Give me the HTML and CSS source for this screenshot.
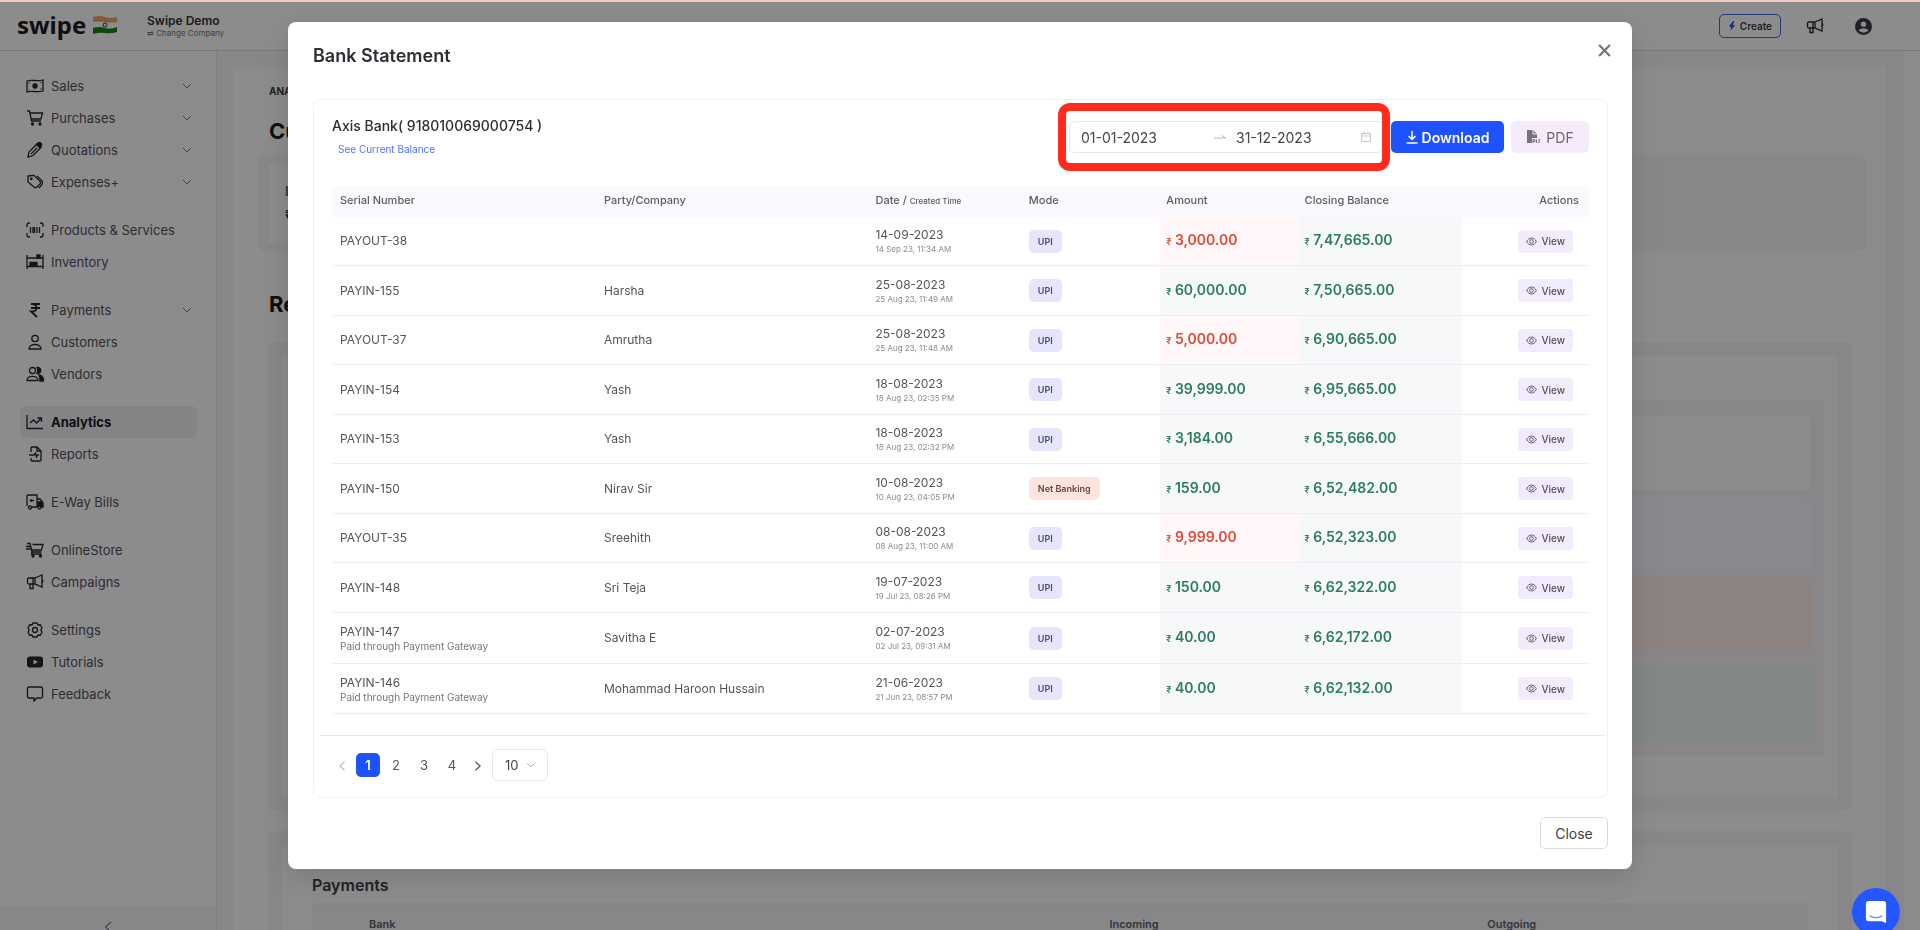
FILE: index.html
```html
<!DOCTYPE html>
<html lang="en">
<head>
    <meta charset="UTF-8">
    <meta name="viewport" content="width=device-width, initial-scale=1.0">
    <title>Bank Statement - Swipe</title>
    <link rel="stylesheet" href="styles.css">
</head>
<body>
    <!-- Icon set -->
    <svg class="sprite" aria-hidden="true">
        <symbol id="i-cash" viewBox="0 0 18 16"><path d="M1 3c5-2 10 1 16-1v11c-6 2-11-1-16 1z"/><circle cx="9" cy="8" r="2" fill="currentColor"/><path d="M3 4.500v1M15 10.500v1M3 11.500v.5M15 4v1"/></symbol>
        <symbol id="i-cart" viewBox="0 0 18 16"><path d="M1 1h2.500l2 10h9.500M4 3h12.500l-1.700 6H5.300"/><circle cx="6.500" cy="14" r="1" fill="currentColor"/><circle cx="14" cy="14" r="1" fill="currentColor"/></symbol>
        <symbol id="i-pen" viewBox="0 0 18 16"><path d="M2 15l1-5 8-8 4 3.500-8 8z"/><path d="M10.500 2.500l2-1.800c2-.6 3.600 1 3 3l-2 1.800z" fill="currentColor"/><path d="M5 12l6-6"/></symbol>
        <symbol id="i-tags" viewBox="0 0 18 16"><path d="M2 2l6-.6 6 6c1 1 .5 2 0 2.500L11 13c-1 1-2 .8-3 0L2 8z"/><path d="M11 2l4.500 4.500c1.500 1.700 1.300 3 0 4.500l-2.500 3"/><circle cx="5.300" cy="4.800" r=".7" fill="currentColor"/></symbol>
        <symbol id="i-barcode" viewBox="0 0 18 16"><path d="M1 5V3q0-2 2-2h1M14 1h1q2 0 2 2v2M17 11v2q0 2-2 2h-1M4 15H3q-2 0-2-2v-2"/><path d="M4.500 5v6M7 5v6M8.500 5v6M11 5v6M13.500 5v6"/></symbol>
        <symbol id="i-shelf" viewBox="0 0 18 16"><path d="M1 1v14M17 1v14M1 4h16M1 12.500h16"/><path d="M11 1h3v3h-3zM4 8.500h3v3H4zM8 8.500h3v3H8z" fill="currentColor"/></symbol>
        <symbol id="i-rupee" viewBox="0 0 18 16"><path d="M5 2h9M5 6h9M6 2c6 0 6 7.500 0 7.500H5l6 5.500" stroke-width="1.800"/></symbol>
        <symbol id="i-user" viewBox="0 0 18 16"><circle cx="9" cy="4.500" r="3.200"/><path d="M3 15c0-6 12-6 12 0z"/></symbol>
        <symbol id="i-users" viewBox="0 0 18 16"><circle cx="6.500" cy="4.500" r="3"/><path d="M1 14.500c0-5.500 11-5.500 11 0z"/><path d="M11 1.500c5 0 5 6 0 6 1-2 1-4 0-6zM13 9c3 .5 4.500 2.500 4.500 6H14c0-2-.3-4-1-6z" fill="currentColor"/></symbol>
        <symbol id="i-chart" viewBox="0 0 18 16"><path d="M1 1v13.500h16M4 9l3.500-3 3 3L15 4.500M11.500 4H15.500v4"/></symbol>
        <symbol id="i-report" viewBox="0 0 18 16"><path d="M5 6V2q0-1 1-1h5l4 4v9q0 1-1 1H6q-1 0-1-1v-2M11 1v4h4M3 9h5l1.500-2 1 4 1-2h1.500"/></symbol>
        <symbol id="i-truck" viewBox="0 0 18 16"><path d="M1 12V2q0-1 1-1h9v12H6M11 5h3l3 4v4h-2M5 5v3M4 6.500h4"/><path d="M12 8h4.500v4H12z" fill="currentColor"/><circle cx="4" cy="13.500" r="1.500"/><circle cx="13.500" cy="13.500" r="1.500"/></symbol>
        <symbol id="i-store" viewBox="0 0 18 16"><path d="M1 1.500h3l2 8.500h9.500M6.500 2.500H17l-1.500 5.500H6M0 4.500h4M0 7h4.500M6 10l-.5 2h10"/><circle cx="7" cy="14" r="1" fill="currentColor"/><circle cx="14.500" cy="14" r="1" fill="currentColor"/></symbol>
        <symbol id="i-horn" viewBox="0 0 18 16"><path d="M9 4L16 1v12l-7-3zM9 4H3Q1.500 4 1.500 5.500v3Q1.500 10 3 10h6M4 10v4.500h3V10M7 4v6M16 5.500q1.500 1.500 0 3"/></symbol>
        <symbol id="i-gear" viewBox="0 0 18 16"><path d="M7 1h4l1 2 2.300-.2 1.700 3-1.200 2.200L16 10.200l-1.700 3L12 13l-1 2H7l-1-2-2.300.2-1.700-3L3.200 8 2 5.800l1.700-3L6 3z"/><circle cx="9" cy="8" r="2.500"/></symbol>
        <symbol id="i-video" viewBox="0 0 18 16"><path fill="currentColor" fill-rule="evenodd" d="M4 2.500h10q3 0 3 3v5q0 3-3 3H4q-3 0-3-3v-5q0-3 3-3zM7.500 5.500v5L12 8z" stroke="none"/></symbol>
        <symbol id="i-chat" viewBox="0 0 18 16"><path d="M3 1h12q1.500 0 1.500 1.500v8Q16.500 12 15 12h-4l-3 3v-3H3q-1.500 0-1.500-1.500v-8Q1.500 1 3 1z"/></symbol>
        <symbol id="i-down" viewBox="0 0 12 12"><path d="M2 4l4 4 4-4"/></symbol>
        <symbol id="i-left" viewBox="0 0 12 12"><path d="M9 1L3.500 6 9 11"/></symbol>
        <symbol id="i-right" viewBox="0 0 12 12"><path d="M3 1l5.500 5L3 11"/></symbol>
        <symbol id="i-eye" viewBox="0 0 12 12"><path d="M.8 6C3 1 9 1 11.200 6 9 11 3 11 .8 6z"/><circle cx="6" cy="6" r="2"/></symbol>
    </svg>

    <div class="top-strip"></div>

    <header class="header">
        <div class="brand">swipe
            <svg class="flag" viewBox="0 0 26 20"><path fill="#f5a65b" d="M1 2q6-2 12 0t12 0v6H1z"/><path fill="#fff" d="M1 7q6-1 12 0t12 0v6H1z"/><path fill="#138808" d="M1 13q6-2 12 0t12-1v5q-6 2-12 1t-12 1z"/><circle cx="13" cy="10" r="2" fill="none" stroke="#335"/></svg>
        </div>
        <div class="company">
            <div class="company-name">Swipe Demo</div>
            <a class="company-change" href="#"><span>⇄</span> Change Company</a>
        </div>
        <div class="header-actions">
            <button class="create-btn" type="button"><svg class="bolt" viewBox="0 0 10 12"><path fill="#1f52ff" d="M6 0L1 7h3l-1 5 6-7H6l2-5z"/></svg>Create</button>
            <svg class="icon"><use href="#i-horn"/></svg>
            <svg class="avatar" viewBox="0 0 18 18"><circle cx="9" cy="9" r="9" fill="#3c3c42"/><circle cx="9" cy="6.500" r="2.800" fill="#fff"/><path d="M3.500 13q5.500-4.500 11 0-5.500 5-11 0z" fill="#fff"/></svg>
        </div>
    </header>

    <div class="layout">
        <nav class="sidebar">
            <div class="nav-group">
                <a class="nav-item" href="#"><svg class="icon"><use href="#i-cash"/></svg>Sales<svg class="caret"><use href="#i-down"/></svg></a>
                <a class="nav-item" href="#"><svg class="icon"><use href="#i-cart"/></svg>Purchases<svg class="caret"><use href="#i-down"/></svg></a>
                <a class="nav-item" href="#"><svg class="icon"><use href="#i-pen"/></svg>Quotations<svg class="caret"><use href="#i-down"/></svg></a>
                <a class="nav-item" href="#"><svg class="icon"><use href="#i-tags"/></svg>Expenses+<svg class="caret"><use href="#i-down"/></svg></a>
            </div>
            <div class="nav-group">
                <a class="nav-item" href="#"><svg class="icon"><use href="#i-barcode"/></svg>Products &amp; Services</a>
                <a class="nav-item" href="#"><svg class="icon"><use href="#i-shelf"/></svg>Inventory</a>
            </div>
            <div class="nav-group">
                <a class="nav-item" href="#"><svg class="icon"><use href="#i-rupee"/></svg>Payments<svg class="caret"><use href="#i-down"/></svg></a>
                <a class="nav-item" href="#"><svg class="icon"><use href="#i-user"/></svg>Customers</a>
                <a class="nav-item" href="#"><svg class="icon"><use href="#i-users"/></svg>Vendors</a>
            </div>
            <div class="nav-group">
                <a class="nav-item active" href="#"><svg class="icon"><use href="#i-chart"/></svg>Analytics</a>
                <a class="nav-item" href="#"><svg class="icon"><use href="#i-report"/></svg>Reports</a>
            </div>
            <div class="nav-group">
                <a class="nav-item" href="#"><svg class="icon"><use href="#i-truck"/></svg>E-Way Bills</a>
            </div>
            <div class="nav-group">
                <a class="nav-item" href="#"><svg class="icon"><use href="#i-store"/></svg>OnlineStore</a>
                <a class="nav-item" href="#"><svg class="icon"><use href="#i-horn"/></svg>Campaigns</a>
            </div>
            <div class="nav-group">
                <a class="nav-item" href="#"><svg class="icon"><use href="#i-gear"/></svg>Settings</a>
                <a class="nav-item" href="#"><svg class="icon"><use href="#i-video"/></svg>Tutorials</a>
                <a class="nav-item" href="#"><svg class="icon"><use href="#i-chat"/></svg>Feedback</a>
            </div>
            <button class="collapse-btn" type="button" aria-label="Collapse menu"><svg class="caret"><use href="#i-left"/></svg></button>
        </nav>

        <main class="main">
            <div class="page">
                <div class="eyebrow">ANALYTICS</div>
                <h1 class="page-title">Current</h1>
                <div class="summary">
                    <div class="summary-card">
                        <div class="summary-label">Bank</div>
                        <div class="summary-value">₹ 0.00</div>
                    </div>
                </div>
                <h2 class="page-title section-title">Reports</h2>
                <section class="section">
                    <div class="tiles">
                        <div class="tile"></div>
                        <div class="tile tile-lilac"></div>
                        <div class="tile tile-peach"></div>
                        <div class="tile tile-mint"></div>
                    </div>
                </section>
                <section class="section payments">
                    <h3 class="payments-title">Payments</h3>
                    <table class="payments-table">
                        <thead><tr><th>Bank</th><th>Incoming</th><th>Outgoing</th></tr></thead>
                    </table>
                </section>
            </div>
        </main>
    </div>

    <div class="overlay">
        <div class="modal" role="dialog" aria-labelledby="modalTitle">
            <div class="modal-header">
                <h2 class="modal-title" id="modalTitle">Bank Statement</h2>
                <button class="modal-x" type="button" aria-label="Close dialog"><svg viewBox="0 0 12 12"><path d="M1 1l10 10M11 1L1 11"/></svg></button>
            </div>

            <div class="card">
                <div class="toolbar">
                    <div class="account">
                        <div class="account-name">Axis Bank( 918010069000754 )</div>
                        <a class="account-link" href="#">See Current Balance</a>
                    </div>
                    <div class="toolbar-actions">
                        <div class="range">
                            <input class="range-input" type="text" value="01-01-2023" aria-label="Start date">
                            <svg class="range-arrow" viewBox="0 0 12 8"><path d="M0 5h11.500L8 2.500"/></svg>
                            <input class="range-input range-end" type="text" value="31-12-2023" aria-label="End date">
                            <svg class="range-cal" viewBox="0 0 10 10"><path d="M.5 1.500h9v8h-9zM.5 4h9M3 0v2.500M7 0v2.500"/></svg>
                        </div>
                        <button class="btn btn-primary" type="button"><svg class="btn-icon" viewBox="0 0 12 14"><path d="M6 1v8M2.500 6L6 9.500 9.500 6M.5 13h11"/></svg>Download</button>
                        <button class="btn btn-pdf" type="button"><svg class="btn-icon pdf-icon" viewBox="0 0 14 14"><path d="M1 0h6l4 4v4H6v5H1z" fill="#77727f"/><path d="M7 0v4h4" fill="none" stroke="#f3eafc"/><path d="M7 9v4M7 9.500h2v2H7M10.500 9.500v3h1M13 13V9.500h1" fill="none" stroke="#77727f"/></svg>PDF</button>
                    </div>
                </div>

                <table class="statement">
                    <thead>
                        <tr>
                            <th class="c-serial">Serial Number</th>
                            <th class="c-party">Party/Company</th>
                            <th class="c-date">Date / <small>Created Time</small></th>
                            <th class="c-mode">Mode</th>
                            <th class="c-amount">Amount</th>
                            <th class="c-balance">Closing Balance</th>
                            <th class="c-actions">Actions</th>
                        </tr>
                    </thead>
                    <tbody>
                        <tr>
                            <td>PAYOUT-38</td>
                            <td></td>
                            <td>14-09-2023<div class="time">14 Sep 23, 11:34 AM</div></td>
                            <td><span class="tag">UPI</span></td>
                            <td class="money out"><span>₹</span> 3,000.00</td>
                            <td class="money in"><span>₹</span> 7,47,665.00</td>
                            <td class="actions"><button class="view-btn" type="button"><svg><use href="#i-eye"/></svg>View</button></td>
                        </tr>
                        <tr>
                            <td>PAYIN-155</td>
                            <td>Harsha</td>
                            <td>25-08-2023<div class="time">25 Aug 23, 11:49 AM</div></td>
                            <td><span class="tag">UPI</span></td>
                            <td class="money in"><span>₹</span> 60,000.00</td>
                            <td class="money in"><span>₹</span> 7,50,665.00</td>
                            <td class="actions"><button class="view-btn" type="button"><svg><use href="#i-eye"/></svg>View</button></td>
                        </tr>
                        <tr>
                            <td>PAYOUT-37</td>
                            <td>Amrutha</td>
                            <td>25-08-2023<div class="time">25 Aug 23, 11:48 AM</div></td>
                            <td><span class="tag">UPI</span></td>
                            <td class="money out"><span>₹</span> 5,000.00</td>
                            <td class="money in"><span>₹</span> 6,90,665.00</td>
                            <td class="actions"><button class="view-btn" type="button"><svg><use href="#i-eye"/></svg>View</button></td>
                        </tr>
                        <tr>
                            <td>PAYIN-154</td>
                            <td>Yash</td>
                            <td>18-08-2023<div class="time">18 Aug 23, 02:35 PM</div></td>
                            <td><span class="tag">UPI</span></td>
                            <td class="money in"><span>₹</span> 39,999.00</td>
                            <td class="money in"><span>₹</span> 6,95,665.00</td>
                            <td class="actions"><button class="view-btn" type="button"><svg><use href="#i-eye"/></svg>View</button></td>
                        </tr>
                        <tr>
                            <td>PAYIN-153</td>
                            <td>Yash</td>
                            <td>18-08-2023<div class="time">18 Aug 23, 02:32 PM</div></td>
                            <td><span class="tag">UPI</span></td>
                            <td class="money in"><span>₹</span> 3,184.00</td>
                            <td class="money in"><span>₹</span> 6,55,666.00</td>
                            <td class="actions"><button class="view-btn" type="button"><svg><use href="#i-eye"/></svg>View</button></td>
                        </tr>
                        <tr>
                            <td>PAYIN-150</td>
                            <td>Nirav Sir</td>
                            <td>10-08-2023<div class="time">10 Aug 23, 04:05 PM</div></td>
                            <td><span class="tag tag-net">Net Banking</span></td>
                            <td class="money in"><span>₹</span> 159.00</td>
                            <td class="money in"><span>₹</span> 6,52,482.00</td>
                            <td class="actions"><button class="view-btn" type="button"><svg><use href="#i-eye"/></svg>View</button></td>
                        </tr>
                        <tr>
                            <td>PAYOUT-35</td>
                            <td>Sreehith</td>
                            <td>08-08-2023<div class="time">08 Aug 23, 11:00 AM</div></td>
                            <td><span class="tag">UPI</span></td>
                            <td class="money out"><span>₹</span> 9,999.00</td>
                            <td class="money in"><span>₹</span> 6,52,323.00</td>
                            <td class="actions"><button class="view-btn" type="button"><svg><use href="#i-eye"/></svg>View</button></td>
                        </tr>
                        <tr>
                            <td>PAYIN-148</td>
                            <td>Sri Teja</td>
                            <td>19-07-2023<div class="time">19 Jul 23, 08:26 PM</div></td>
                            <td><span class="tag">UPI</span></td>
                            <td class="money in"><span>₹</span> 150.00</td>
                            <td class="money in"><span>₹</span> 6,62,322.00</td>
                            <td class="actions"><button class="view-btn" type="button"><svg><use href="#i-eye"/></svg>View</button></td>
                        </tr>
                        <tr class="tall">
                            <td>PAYIN-147<div class="note">Paid through Payment Gateway</div></td>
                            <td>Savitha E</td>
                            <td>02-07-2023<div class="time">02 Jul 23, 09:31 AM</div></td>
                            <td><span class="tag">UPI</span></td>
                            <td class="money in"><span>₹</span> 40.00</td>
                            <td class="money in"><span>₹</span> 6,62,172.00</td>
                            <td class="actions"><button class="view-btn" type="button"><svg><use href="#i-eye"/></svg>View</button></td>
                        </tr>
                        <tr class="tall">
                            <td>PAYIN-146<div class="note">Paid through Payment Gateway</div></td>
                            <td>Mohammad Haroon Hussain</td>
                            <td>21-06-2023<div class="time">21 Jun 23, 08:57 PM</div></td>
                            <td><span class="tag">UPI</span></td>
                            <td class="money in"><span>₹</span> 40.00</td>
                            <td class="money in"><span>₹</span> 6,62,132.00</td>
                            <td class="actions"><button class="view-btn" type="button"><svg><use href="#i-eye"/></svg>View</button></td>
                        </tr>
                    </tbody>
                </table>

                <div class="pagination">
                    <button class="page-btn page-nav" type="button" aria-label="Previous page" disabled><svg><use href="#i-left"/></svg></button>
                    <button class="page-btn current" type="button">1</button>
                    <button class="page-btn" type="button">2</button>
                    <button class="page-btn" type="button">3</button>
                    <button class="page-btn" type="button">4</button>
                    <button class="page-btn page-nav" type="button" aria-label="Next page"><svg><use href="#i-right"/></svg></button>
                    <div class="page-size">
                        <select aria-label="Rows per page"><option>10</option><option>20</option><option>50</option></select>
                        <svg><use href="#i-down"/></svg>
                    </div>
                </div>
            </div>

            <div class="modal-footer">
                <button class="close-btn" type="button">Close</button>
            </div>
        </div>
    </div>

    <button class="chat-btn" type="button" aria-label="Open chat"><svg viewBox="0 0 24 26"><path d="M4 1h16q3 0 3 3v21l-5-2H4q-3 0-3-3V4q0-3 3-3z" fill="#fff"/><path d="M5 17q7 4.500 14 0" fill="none" stroke="#8296e8" stroke-width="1.500"/></svg></button>
</body>
</html>
```
FILE: styles.css
```css
* {
    box-sizing: border-box;
}
body {
    margin: 0;
    height: 100vh;
    overflow: hidden;
    background: #fff;
    font-family: Inter, "Liberation Sans", sans-serif;
    font-size: 13px;
    color: #3f3d45;
    display: flex;
    flex-direction: column;
}
h1, h2, h3 {
    margin: 0;
}
a {
    color: inherit;
    text-decoration: none;
}
button, input, select {
    font-family: inherit;
    color: inherit;
}
button {
    cursor: pointer;
}
svg {
    fill: none;
    stroke: currentColor;
    flex-shrink: 0;
}
.sprite {
    position: absolute;
    width: 0;
    height: 0;
}
.top-strip {
    height: 2px;
    background: #f3c9c1;
    position: relative;
    z-index: 20;
    flex-shrink: 0;
}

/* Header */
.header {
    height: 49px;
    flex-shrink: 0;
    border-bottom: 1px solid #dcdadf;
    display: flex;
    align-items: center;
    padding: 0 48px 0 17px;
}
.brand {
    display: flex;
    align-items: center;
    gap: 6px;
    width: 130px;
    padding-bottom: 2px;
    font-family: "Noto Sans", sans-serif;
    font-size: 24px;
    line-height: 40px;
    font-weight: 700;
    color: #1c1c22;
}
.flag {
    width: 26px;
    height: 20px;
    stroke: none;
}
.company-name {
    font-size: 12px;
    line-height: 14px;
    font-weight: 600;
    color: #333;
}
.company-change {
    display: block;
    font-size: 8px;
    line-height: 10px;
    color: #777;
}
.header-actions {
    margin-left: auto;
    display: flex;
    align-items: center;
    gap: 25px;
}
.create-btn {
    display: flex;
    align-items: center;
    gap: 4px;
    height: 24px;
    padding: 0 8px;
    background: #fff;
    border: 1px solid #3f66dd;
    border-radius: 5px;
    font-size: 10px;
    font-weight: 600;
}
.bolt {
    width: 8px;
    height: 10px;
    stroke: none;
}
.avatar {
    width: 17px;
    height: 17px;
    stroke: none;
    margin-left: 6px;
}
.icon {
    width: 18px;
    height: 16px;
    stroke-width: 1.3;
    color: #26262c;
}
.caret {
    width: 12px;
    height: 12px;
}

/* Sidebar */
.layout {
    flex: 1;
    display: flex;
    min-height: 0;
}
.sidebar {
    width: 217px;
    flex-shrink: 0;
    border-right: 1px solid #e6e4e8;
    padding-top: 19px;
    display: flex;
    flex-direction: column;
}
.nav-group {
    margin: 0 19px 16px 20px;
}
.nav-item {
    display: flex;
    align-items: center;
    gap: 7px;
    height: 32px;
    padding: 0 4px 0 6px;
    color: #55535b;
}
.nav-item .caret {
    margin-left: auto;
    color: #77757d;
}
.nav-item.active {
    background: #f1eff1;
    border-radius: 6px;
    font-weight: 700;
    color: #1a1a1f;
}
.collapse-btn {
    margin-top: auto;
    height: 24px;
    border: 0;
    background: #f6f4f7;
    padding-top: 14px;
    overflow: hidden;
}

/* Page behind the dialog */
.main {
    flex: 1;
    margin-right: 16px;
    padding: 16px 18px 0 16px;
    background: #f8f5f8;
    overflow: hidden;
}
.page {
    background: #fff;
    padding: 18px 20px 0 24px;
    height: 1200px;
}
.eyebrow {
    padding-left: 12px;
    font-size: 10px;
    line-height: 12px;
    font-weight: 700;
}
.page-title {
    padding-left: 12px;
    margin-top: 20px;
    font-size: 22px;
    line-height: 28px;
    font-weight: 700;
    color: #1c1c22;
}
.summary {
    margin-top: 10px;
    padding: 8px 12px;
    background: #f7f4f6;
    border-radius: 8px;
}
.summary-card {
    width: 25%;
    height: 80px;
    padding: 16px;
    background: #fff;
    font-size: 13px;
    line-height: 24px;
    font-weight: 700;
}
.summary-label {
    color: #2b8a6a;
}
.section-title {
    margin-top: 39px;
}
.section {
    margin: 24px 14px 0 11px;
    padding: 44px 14px 41px;
    border: 14px solid #f7f4f6;
    border-radius: 8px;
    background: #fff;
}
.tiles {
    padding: 16px 13px;
    background: #f7f4f6;
    display: flex;
    flex-direction: column;
    gap: 6px;
}
.tile {
    height: 74px;
    background: #fff;
    border-radius: 6px;
}
.tile-lilac {
    background: #fbf8ff;
}
.tile-peach {
    background: #ffeeea;
}
.tile-mint {
    margin-top: 10px;
    background: #ecf7f5;
}
.payments {
    padding: 28px 30px;
    margin-top: 20px;
}
.payments-title {
    font-size: 16px;
    line-height: 24px;
    font-weight: 600;
}
.payments-table {
    width: 100%;
    margin-top: 6px;
    border-collapse: collapse;
    background: #f6f4f6;
}
.payments-table th {
    width: 25%;
    height: 42px;
    padding: 0 0 0 57px;
    text-align: left;
    font-size: 11px;
    font-weight: 600;
    color: #66646c;
}
.payments-table th:first-child {
    width: 49%;
}

/* Dialog */
.overlay {
    position: fixed;
    inset: 2px 0 0;
    z-index: 10;
    padding-top: 20px;
    background: rgba(0, 0, 3, 0.45);
}
.modal {
    width: 70%;
    margin: 0 auto;
    padding: 20px 24px 20px 25px;
    background: #fff;
    border-radius: 8px;
    box-shadow: 0 8px 32px rgba(0, 0, 0, 0.15);
}
.modal-header {
    display: flex;
    justify-content: space-between;
    align-items: center;
    height: 27px;
}
.modal-title {
    font-size: 18px;
    line-height: 24px;
    font-weight: 600;
    color: #2f2d34;
}
.modal-x {
    padding: 0;
    margin: 0 -3px 10px 0;
    border: 0;
    background: none;
    color: #77757b;
}
.modal-x svg {
    display: block;
    width: 13px;
    height: 13px;
    stroke-width: 2;
}
.card {
    margin-top: 30px;
    border: 1px solid #f3eff6;
    border-radius: 8px;
}
.toolbar {
    display: flex;
    justify-content: space-between;
    padding: 14px 18px 0;
}
.account-name {
    font-size: 14px;
    line-height: 24px;
    font-weight: 500;
    color: #2f2d34;
}
.account-link {
    display: block;
    padding-left: 6px;
    font-size: 10px;
    line-height: 22px;
    color: #4f74f5;
}
.toolbar-actions {
    display: flex;
    gap: 7px;
    padding-top: 7px;
    height: 39px;
}
.range {
    position: relative;
    display: flex;
    align-items: center;
    width: 315px;
    padding: 0 12px 0 11px;
    border: 1px solid #e8e5ec;
    border-radius: 6px;
}
/* Highlight round the date range */
.range::after {
    content: "";
    position: absolute;
    inset: -19px -7px -19px -12px;
    border: 8px solid #ff2b1c;
    border-radius: 12px;
    pointer-events: none;
}
.range-input {
    width: 100px;
    flex: 1;
    min-width: 0;
    border: 0;
    padding: 0;
    background: none;
    font-size: 14px;
    color: #45434b;
}
.range-end {
    flex: none;
    width: 125px;
}
.range-arrow {
    width: 12px;
    height: 8px;
    margin-right: 10px;
    color: #b5b3ba;
}
.range-cal {
    width: 10px;
    height: 10px;
    color: #c8c6cc;
}
.btn {
    display: flex;
    align-items: center;
    justify-content: center;
    gap: 4px;
    border: 0;
    border-radius: 5px;
    font-size: 14px;
}
.btn-primary {
    width: 113px;
    background: #1f52ff;
    color: #fff;
    font-weight: 600;
}
.btn-icon {
    width: 12px;
    height: 14px;
    stroke-width: 1.5;
}
.btn-pdf {
    width: 78px;
    gap: 6px;
    background: #f5ebfc;
    color: #6a6572;
}
.pdf-icon {
    width: 14px;
    stroke: none;
    stroke-width: 1;
}

.statement {
    width: calc(100% - 36px);
    margin: 26px 18px 0;
    border-collapse: separate;
    border-spacing: 0;
    table-layout: fixed;
}
.statement th {
    height: 31px;
    padding: 0 8px 4px;
    background: #fbf9fd;
    text-align: left;
    font-size: 11px;
    font-weight: 500;
    color: #5d5b63;
}
.statement th small {
    font-size: 8px;
}
.statement td {
    height: 49px;
    padding: 0 8px;
    border-bottom: 1px solid #efedf2;
    font-size: 12px;
    line-height: 16px;
    color: #55535b;
}
.statement tr:nth-child(even) td {
    height: 50px;
}
.statement .tall td {
    height: 51px;
}
.c-serial {
    width: 21%;
}
.c-party {
    width: 21.6%;
}
.c-date {
    width: 12.2%;
}
.c-mode {
    width: 11.1%;
}
.c-amount {
    width: 11%;
}
.c-balance {
    width: 13%;
}
.statement th.c-amount,
.statement th.c-balance,
.statement td.money {
    padding-left: 6px;
}
.statement th.c-actions {
    text-align: right;
    padding-right: 10px;
}
.statement .time {
    font-size: 8px;
    line-height: 12px;
    color: #8b8991;
}
.note {
    font-size: 10px;
    line-height: 12px;
    color: #77757d;
}
.tag {
    display: inline-block;
    padding: 0 9px;
    border-radius: 5px;
    background: #e6e5fc;
    font-size: 9px;
    line-height: 23px;
    font-weight: 600;
    color: #4b4878;
}
.tag-net {
    background: #fde5dd;
    color: #6e4438;
}
.statement td.money {
    font-size: 14px;
    font-weight: 600;
}
.money span {
    font-size: 9px;
}
.statement td.in {
    background: #f6f8f9;
    color: #2c7d5e;
}
.statement td.out {
    background: #fff7f8;
    color: #dc4a38;
}
.statement td.actions {
    text-align: right;
    padding-right: 16px;
}
.view-btn {
    display: inline-flex;
    align-items: center;
    gap: 4px;
    height: 23px;
    padding: 0 8px;
    border: 0;
    border-radius: 4px;
    background: #f2eafd;
    font-size: 10px;
    font-weight: 500;
}
.view-btn svg {
    width: 11px;
    height: 11px;
}

.pagination {
    display: flex;
    align-items: center;
    gap: 4px;
    margin: 21px 2px 0 6px;
    padding: 13px 12px 16px;
    border-top: 1px solid #e8e6eb;
}
.page-btn {
    width: 24px;
    height: 24px;
    padding: 0;
    border: 0;
    border-radius: 5px;
    background: none;
    font-size: 13px;
    color: #55535b;
}
.page-nav {
    width: 20px;
}
.page-btn svg {
    width: 10px;
    height: 10px;
    stroke-width: 1.5;
    vertical-align: middle;
}
.page-btn:disabled {
    color: #bdbbc2;
}
.page-btn.current {
    background: #1f52ff;
    color: #fff;
    font-weight: 600;
}
.page-size {
    position: relative;
}
.page-size select {
    appearance: none;
    display: block;
    width: 56px;
    height: 32px;
    padding: 0 12px;
    border: 1px solid #e8e5ec;
    border-radius: 6px;
    background: none;
    font-size: 13px;
}
.page-size svg {
    position: absolute;
    right: 11px;
    top: 10px;
    width: 12px;
    height: 12px;
    color: #b5b3ba;
    pointer-events: none;
}
.modal-footer {
    display: flex;
    justify-content: flex-end;
    margin-top: 19px;
}
.close-btn {
    width: 68px;
    height: 32px;
    border: 1px solid #dcdae0;
    border-radius: 5px;
    background: #fff;
    font-size: 14px;
}
.chat-btn {
    position: fixed;
    right: 20px;
    bottom: -6px;
    z-index: 20;
    width: 48px;
    height: 48px;
    padding: 0;
    border: 0;
    border-radius: 50%;
    background: #2457ff;
}
.chat-btn svg {
    width: 22px;
    height: 24px;
    stroke: none;
    vertical-align: middle;
}
```
